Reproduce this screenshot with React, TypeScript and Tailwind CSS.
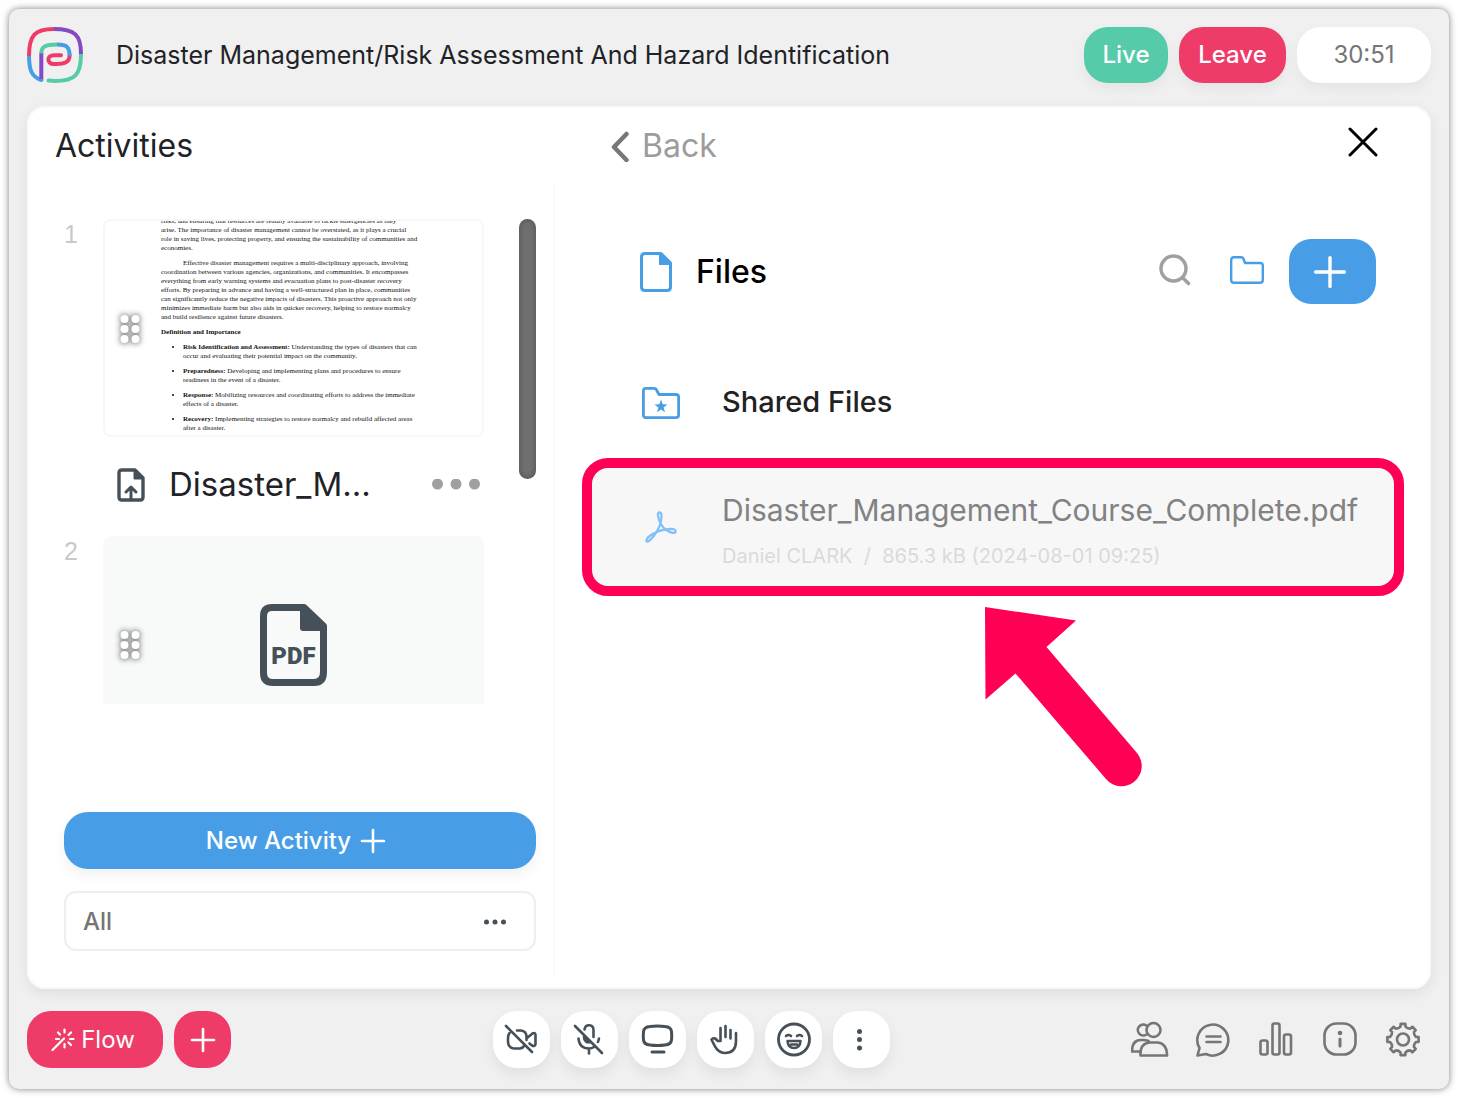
import type { ReactNode } from "react";

function Logo() {
  return (
    <svg width="56" height="56" viewBox="0 0 56 56" fill="none" strokeWidth="4" strokeLinecap="round">
      <path stroke="#479ee6" d="M2 28C2 44 5 50 14.5 53" />
      <path stroke="#56cbaa" d="M54 27C54 48 48 54 28 54L21.5 53.6" />
      <path stroke="#8449c4" strokeLinecap="butt" d="M27 2C48 2 54 8 54 27M14.3 52V26" />
      <path stroke="#ef3b68" strokeLinecap="butt" d="M2 29C2 8 8 2 27 2" />
      <path stroke="#56cbaa" strokeLinecap="butt" d="M14.3 26.5C14.3 19.5 18 17.6 30 17.6" />
      <path stroke="#ef3b68" d="M34 28.2H27C19.5 28.2 19.5 37 27 37C37 37.4 42.6 35.5 42.6 28.5" />
      <path stroke="#479ee6" strokeLinecap="butt" d="M30 17.6C40 17.6 42.6 20 42.6 29" />
    </svg>
  );
}

function Plus({ size }: { size: number }) {
  return (
    <svg width={size} height={size} viewBox="0 0 26 26" fill="none" stroke="currentColor" strokeWidth="2.6" strokeLinecap="round">
      <path d="M13 2V24M2 13H24" />
    </svg>
  );
}

function Grip() {
  return (
    <svg width="32" height="42" viewBox="0 0 32 42" className="drop-shadow-[0_0_3px_rgba(0,0,0,0.75)]" fill="#fff">
      {[11, 21, 31].map((y) => (
        <g key={y}>
          <circle cx="10.5" cy={y} r="4" />
          <circle cx="21.5" cy={y} r="4" />
        </g>
      ))}
    </svg>
  );
}

function IconButton({ label, children }: { label: string; children: ReactNode }) {
  return (
    <button
      aria-label={label}
      className="grid h-[57px] w-[57px] place-items-center rounded-[24px] bg-white text-[#455059] shadow-[0_6px_14px_rgba(0,0,0,0.07)]"
    >
      <svg width="40" height="40" viewBox="0 1 40 40" fill="none" stroke="currentColor" strokeWidth="2.6" strokeLinecap="round" strokeLinejoin="round">
        {children}
      </svg>
    </button>
  );
}

function BarButton({ label, children }: { label: string; children: ReactNode }) {
  return (
    <button aria-label={label} className="text-[#757575]">
      <svg width="40" height="40" viewBox="0 0 40 40" fill="none" stroke="currentColor" strokeWidth="2.6" strokeLinecap="round" strokeLinejoin="round">
        {children}
      </svg>
    </button>
  );
}

// eight teeth joined by shallow curved valleys
const gear = (() => {
  const at = (r: number, a: number) =>
    `${(20 + r * Math.cos(a)).toFixed(2)} ${(19.5 + r * Math.sin(a)).toFixed(2)}`;
  let d = "";
  for (let i = 0; i < 8; i++) {
    const a = (i * Math.PI) / 4 - Math.PI / 2;
    d += `${i ? "L" : "M"}${at(13.2, a - 0.19)}L${at(15.8, a - 0.15)}L${at(15.8, a + 0.15)}L${at(13.2, a + 0.19)}`;
    d += `Q${at(11.6, a + Math.PI / 8)} ${at(13.2, a + Math.PI / 4 - 0.19)}`;
  }
  return `${d}Z`;
})();

const points = [
  ["Risk Identification and Assessment:", "Understanding the types of disasters that can", "occur and evaluating their potential impact on the community."],
  ["Preparedness:", "Developing and implementing plans and procedures to ensure", "readiness in the event of a disaster."],
  ["Response:", "Mobilizing resources and coordinating efforts to address the immediate", "effects of a disaster."],
  ["Recovery:", "Implementing strategies to restore normalcy and rebuild affected areas", "after a disaster."],
];

function DocumentPreview() {
  return (
    <div className="flex h-full flex-col justify-end gap-[6px] pb-[2px] pl-[56px] font-['Liberation_Serif',serif] text-[7px] leading-[9px] whitespace-nowrap text-[#111]">
      <p>
        risks, and ensuring that resources are readily available to tackle emergencies as they
        <br />
        arise. The importance of disaster management cannot be overstated, as it plays a crucial
        <br />
        role in saving lives, protecting property, and ensuring the sustainability of communities and
        <br />
        economies.
      </p>
      <p className="indent-[22px]">
        Effective disaster management requires a multi-disciplinary approach, involving
        <br />
        coordination between various agencies, organizations, and communities. It encompasses
        <br />
        everything from early warning systems and evacuation plans to post-disaster recovery
        <br />
        efforts. By preparing in advance and having a well-structured plan in place, communities
        <br />
        can significantly reduce the negative impacts of disasters. This proactive approach not only
        <br />
        minimizes immediate harm but also aids in quicker recovery, helping to restore normalcy
        <br />
        and build resilience against future disasters.
      </p>
      <h3 className="font-bold">Definition and Importance</h3>
      <ul className="flex list-disc flex-col gap-[6px] pl-[22px]">
        {points.map(([term, first, second]) => (
          <li key={term}>
            <b>{term}</b> {first}
            <br />
            {second}
          </li>
        ))}
      </ul>
    </div>
  );
}

function Header() {
  return (
    <header className="flex h-14 items-center">
      <Logo />
      <h1 className="ml-[33px] flex-1 pt-[2px] text-[25px] text-[#1f2327]">
        Disaster Management/Risk Assessment And Hazard Identification
      </h1>
      <div className="flex gap-[11px] text-[24px] font-medium text-white">
        <button className="h-14 w-[84px] rounded-[24px] bg-[#56cbaa] shadow-[0_6px_14px_rgba(0,0,0,0.05)]">Live</button>
        <button className="h-14 w-[107px] rounded-[24px] bg-[#ef3b68] shadow-[0_6px_14px_rgba(0,0,0,0.05)]">Leave</button>
        <div className="grid h-14 w-[134px] place-items-center rounded-[24px] bg-white font-normal text-[#757575] shadow-[0_6px_14px_rgba(0,0,0,0.05)]">
          30:51
        </div>
      </div>
    </header>
  );
}

function Activities() {
  return (
    <aside className="flex w-[528px] shrink-0 flex-col border-r border-[#f5f5f5] pt-[34px] pr-[18px] pl-[37px]">
      <div className="flex justify-between">
        <ol className="flex h-[485px] flex-col overflow-hidden">
          <li className="flex">
            <span className="w-[39px] font-['Liberation_Sans',sans-serif] text-[25px] leading-[30px] text-[#c9c9c9]">1</span>
            <div className="w-[381px]">
              <div className="relative h-[218px] overflow-hidden rounded-lg border-2 border-[#f7f7f7] bg-white">
                <DocumentPreview />
                <button aria-label="Move activity 1" className="absolute top-[87px] left-[9px]">
                  <Grip />
                </button>
              </div>
              <div className="flex h-[99px] items-center pr-1 pb-1 pl-[14px]">
                <svg width="28" height="34" viewBox="0 0 28 34" fill="none" stroke="#455059" strokeWidth="3.4" strokeLinejoin="round">
                  <path d="M5 2H18L26 10V29Q26 32 23 32H5Q2 32 2 29V5Q2 2 5 2Z" />
                  <path fill="#455059" strokeWidth="1" d="M17 2L26.5 11H17Z" />
                  <path d="M14 31V19.5M9 24L14 19L19 24" strokeLinecap="round" strokeWidth="3" />
                </svg>
                <span className="ml-6 flex-1 text-[33px] text-[#1f2327]">Disaster_M...</span>
                <button aria-label="Activity options">
                  <svg width="48" height="12" viewBox="0 0 48 12" fill="#a0a0a0">
                    <circle cx="5.5" cy="5" r="5.5" />
                    <circle cx="24" cy="5" r="5.5" />
                    <circle cx="42.5" cy="5" r="5.5" />
                  </svg>
                </button>
              </div>
            </div>
          </li>
          <li className="flex">
            <span className="w-[39px] font-['Liberation_Sans',sans-serif] text-[25px] leading-[30px] text-[#c9c9c9]">2</span>
            <div className="relative grid h-[218px] w-[381px] place-items-center rounded-lg bg-[#f8faf9]">
              <svg width="67" height="82" viewBox="0 0 67 82" fill="none" stroke="#455059" strokeWidth="7">
                <path d="M12 3.5H44L63.5 22V68Q63.5 78.5 54 78.5H13Q3.5 78.5 3.5 69V12Q3.5 3.5 12 3.5Z" strokeLinejoin="round" />
                <path fill="#455059" stroke="none" d="M40 2H46L66 22V27H43Q40 27 40 24Z" />
                <text x="33.5" y="60" textAnchor="middle" fill="#455059" stroke="none" className="font-['Roboto',sans-serif] text-[24px] font-black">
                  PDF
                </text>
              </svg>
              <button aria-label="Move activity 2" className="absolute top-[88px] left-[11px]">
                <Grip />
              </button>
            </div>
          </li>
        </ol>
        <div className="h-[260px] w-[17px] rounded-full bg-[#707070] shadow-[inset_0_0_6px_rgba(0,0,0,0.3)]" />
      </div>

      <button className="mt-[108px] flex h-[57px] items-center justify-center gap-[9px] rounded-[24px] bg-[#479ee6] pr-2 text-[24px] font-medium text-white shadow-[0_6px_14px_rgba(0,0,0,0.06)]">
        New Activity
        <Plus size={26} />
      </button>
      <label className="mt-[22px] flex h-[60px] items-center rounded-xl border-2 border-[#efefef] pt-[2px] pr-7 pl-[17px]">
        <select aria-label="Filter activities" className="flex-1 appearance-none bg-transparent text-[24px] font-medium text-[#757575] outline-none">
          <option>All</option>
        </select>
        <svg width="22" height="6" viewBox="0 0 22 6" fill="#455059">
          <circle cx="2.5" cy="3" r="2.5" />
          <circle cx="11" cy="3" r="2.5" />
          <circle cx="19.5" cy="3" r="2.5" />
        </svg>
      </label>
    </aside>
  );
}

function Files() {
  return (
    <section className="flex-1 px-[27px] pt-[54px]">
      <div className="flex items-center pr-7 pl-[58px]">
        <svg width="32" height="40" viewBox="0 0 32 40" fill="none" stroke="#479ee6" strokeWidth="3" strokeLinejoin="round">
          <path d="M5 1.5H21L30.5 11V35Q30.5 38.5 27 38.5H5Q1.5 38.5 1.5 35V5Q1.5 1.5 5 1.5Z" />
          <path fill="#479ee6" stroke="none" d="M19 1H22L31 10V13H19Z" />
        </svg>
        <h2 className="ml-6 flex-1 text-[32px] font-medium text-black">Files</h2>
        <button aria-label="Search files" className="pb-1">
          <svg width="32" height="32" viewBox="0 0 32 32" fill="none" stroke="#a0a0a0" strokeWidth="3.5" strokeLinecap="round">
            <circle cx="14.5" cy="14.5" r="12.5" />
            <path d="M24 24L29.5 29.5" />
          </svg>
        </button>
        <button aria-label="New folder" className="ml-[39px] pb-1">
          <svg width="34" height="28" viewBox="0 0 34 28" fill="none" stroke="#479ee6" strokeWidth="2.4" strokeLinejoin="round">
            <path d="M4 1.2H11Q13 1.2 13.5 3L15 7H30Q32.8 7 32.8 9.5V24Q32.8 26.8 30 26.8H4Q1.2 26.8 1.2 24V4Q1.2 1.2 4 1.2Z" />
          </svg>
        </button>
        <button aria-label="Add file" className="ml-[25px] grid h-[65px] w-[87px] place-items-center rounded-[22px] bg-[#479ee6] pr-[6px] text-white">
          <Plus size={34} />
        </button>
      </div>

      <button className="mt-[68px] flex h-[60px] w-full items-center pl-[60px] text-left">
        <svg width="38" height="34" viewBox="0 -2 38 34" fill="none" stroke="#479ee6" strokeWidth="2.8" strokeLinejoin="round">
          <path d="M4 1.4H12Q14 1.4 14.8 3.5L17 7.5H34Q36.6 7.5 36.6 10V28Q36.6 30.6 34 30.6H4Q1.4 30.6 1.4 28V4Q1.4 1.4 4 1.4Z" />
          <path fill="#479ee6" stroke="none" d="M19 12.5L20.7 17.3L25.5 17.4L21.6 20.4L23 25.2L19 22.4L15 25.2L16.4 20.4L12.5 17.4L17.3 17.3Z" />
        </svg>
        <span className="ml-[42px] text-[29px] font-medium text-[#222]">Shared Files</span>
      </button>

      <div className="relative mt-[26px]">
        <button className="flex h-[138px] w-full items-center rounded-[26px] border-[10px] border-[#ff0055] bg-[#f7f7f7] pl-[53px] text-left">
          <svg width="32" height="32" viewBox="0 0 32 32" fill="none" stroke="#82c0f8" strokeWidth="2.3" strokeLinejoin="round">
            <path d="M14.5 1.5C17 1.5 17 5 15.5 12.5C17.5 16 19 17.5 21 18.5C29 17 31 18.5 30.5 21C29.5 23 25 21.5 20.5 18.5C17 18.8 14 20 11.5 21C7.5 27 3.5 31 1.8 30.5C0 28.5 4.5 24 11.5 21C14 16.5 15 14.5 15.5 12.5C12.5 5.5 12 1.5 14.5 1.5Z" />
          </svg>
          <span className="ml-[45px] flex flex-col pt-3 leading-[46px]">
            <span className="text-[30px] text-[#828282]">Disaster_Management_Course_Complete.pdf</span>
            <span className="text-[20px] whitespace-pre text-[#dadada]">Daniel CLARK  /  865.3 kB (2024-08-01 09:25)</span>
          </span>
        </button>
        <svg className="absolute top-[148px] left-[403px]" width="158" height="182" viewBox="0 0 158 182" fill="#ff0055">
          <path d="M0 1L91 14.5L61.5 41L152 147A20 20 0 0 1 121 173L30.5 67.5L0.5 93.5Z" />
        </svg>
      </div>
    </section>
  );
}

function BottomBar() {
  return (
    <footer className="grid grid-cols-[1fr_auto_1fr] items-center">
      <div className="flex gap-[11px] text-white">
        <button className="flex h-[57px] w-[136px] items-center justify-center gap-[6px] rounded-[24px] bg-[#ef3b68] pr-1 text-[24px]">
          <svg width="24" height="24" viewBox="0 0 24 24" fill="none" stroke="currentColor" strokeWidth="2.2" strokeLinecap="round">
            <path d="M1.5 22L13 10.5M13.5 1.5V4.5M13.5 16V19.5M19 11H22.5M5 11H8M7 4.5L9 6.5M20 4.5L17.5 7M17.5 14.5L20 17" />
          </svg>
          Flow
        </button>
        <button aria-label="Add to flow" className="grid h-[57px] w-[57px] place-items-center rounded-[24px] bg-[#ef3b68]">
          <Plus size={26} />
        </button>
      </div>

      <div className="flex gap-[11px] pr-[76px]">
        <IconButton label="Turn camera on">
          <path d="M5 7L31 33M16 11.5H20Q25 12 25.5 17V21M8.5 14Q7 16 7 19V23Q7.5 29 13 29.5H19Q22 29 23.5 26.5M26 19L31.5 14.5Q34.5 13 34.5 16V25Q34 28 31 26.5L28.5 24.5" />
        </IconButton>
        <IconButton label="Unmute microphone">
          <path d="M6 7L33 34M15.5 10.5C16.5 4.5 24.5 5 24.5 11V18M15 18C15 22 18 24 21 23M9.5 19.5C10 26 14 29.5 20 29.5C22 29.5 23.5 29 25 28M30 19.5L29 23M20 30V34.5" />
          <path fill="currentColor" strokeWidth="1" d="M15 17L22 23.5Q16 24.5 15 17Z" />
        </IconButton>
        <IconButton label="Share screen">
          <path strokeWidth="3" d="M13 7.5Q20.500 6.500 28 7.500Q34 8 34.500 12.500Q35 17 34.500 21Q34 25.500 28 26Q20.500 27 13 26Q7 25.500 6.500 21Q6 17 6.500 12.500Q7 8 13 7.500ZM15 33H27" />
        </IconButton>
        <IconButton label="Raise hand">
          <path d="M15.5 20.5V9M20.5 18V7M25.5 19.5V11M31 14V22C31 30 27 34 20 34C13 34 10.5 29 6.5 20.5C8 18.5 11 19 12.5 22H15.5V9" />
        </IconButton>
        <IconButton label="Reactions">
          <circle cx="21" cy="20.5" r="15.5" strokeWidth="2.8" />
          <path d="M13 17Q15.5 15 18 17M24 17Q26.5 15 29 17M14.5 22H27.5Q27 29 21 29Q15 29 14.5 22ZM18 25.5H24" />
        </IconButton>
        <IconButton label="More options">
          <g fill="currentColor" stroke="none">
            <circle cx="18.5" cy="12.5" r="2.5" />
            <circle cx="18.5" cy="20.5" r="2.5" />
            <circle cx="18.5" cy="29" r="2.5" />
          </g>
        </IconButton>
      </div>

      <div className="flex justify-end gap-[23px] pr-2">
        <BarButton label="Participants">
          <circle cx="22.5" cy="10" r="7" />
          <path d="M15.5 5.5A5.5 5.5 0 1 0 15.5 14.5M9.5 35.5C9 26.5 13.5 23 18.5 22.5H27C32.5 23 36.5 28 36 35.5ZM17.5 21C13.5 19.5 7.5 20 5.5 21C2 23 1 27 1 31.5H9" />
        </BarButton>
        <BarButton label="Chat">
          <path d="M3.5 35.5L5.5 28A15.5 15.5 0 1 1 12 34ZM12.5 16.5H26.5M12.5 22H26.5" />
        </BarButton>
        <BarButton label="Polls">
          <rect x="3.5" y="20.5" width="7" height="14" rx="2" />
          <rect x="15.5" y="3.5" width="7" height="31" rx="2" />
          <rect x="27" y="14.5" width="7" height="20" rx="2" />
        </BarButton>
        <BarButton label="Information">
          <rect x="4.5" y="3.5" width="31" height="31" rx="12" />
          <path d="M20 19V26" strokeWidth="3" />
          <circle cx="20" cy="13" r="2.3" fill="currentColor" stroke="none" />
        </BarButton>
        <BarButton label="Settings">
          <circle cx="20" cy="19.5" r="6" />
          <path d={gear} />
        </BarButton>
      </div>
    </footer>
  );
}

export default function App() {
  return (
    <div className="flex min-h-screen bg-white p-[9px] font-['Inter',sans-serif]">
      <div className="flex flex-1 flex-col rounded-[10px] bg-[#f0f0f0] px-[18px] pt-[18px] pb-[21px] shadow-[0_0_7px_rgba(0,0,0,0.5)]">
        <Header />
        <main className="mt-[23px] mb-[22px] flex flex-1 flex-col rounded-[18px] bg-white pb-[14px] shadow-[0_4px_14px_rgba(0,0,0,0.08),inset_0_0_0_2px_#f9f9f9]">
          <div className="flex h-[79px] items-center">
            <h2 className="w-[528px] pl-7 text-[32px] text-[#1f2327]">Activities</h2>
            <div className="flex flex-1 items-center justify-between pr-[53px] pl-[55px]">
              <button className="flex items-center gap-3 text-[32px] text-[#9c9c9c]">
                <svg width="20" height="32" viewBox="0 0 20 32" fill="none" stroke="#787878" strokeWidth="4.5" strokeLinecap="round" strokeLinejoin="round">
                  <path d="M16.5 4L4 17L16.5 30" />
                </svg>
                Back
              </button>
              <button aria-label="Close" className="pb-2 text-black">
                <svg width="30" height="30" viewBox="0 0 30 30" fill="none" stroke="currentColor" strokeWidth="3" strokeLinecap="round">
                  <path d="M2 2L28 28M28 2L2 28" />
                </svg>
              </button>
            </div>
          </div>
          <div className="flex flex-1">
            <Activities />
            <Files />
          </div>
        </main>
        <BottomBar />
      </div>
    </div>
  );
}
